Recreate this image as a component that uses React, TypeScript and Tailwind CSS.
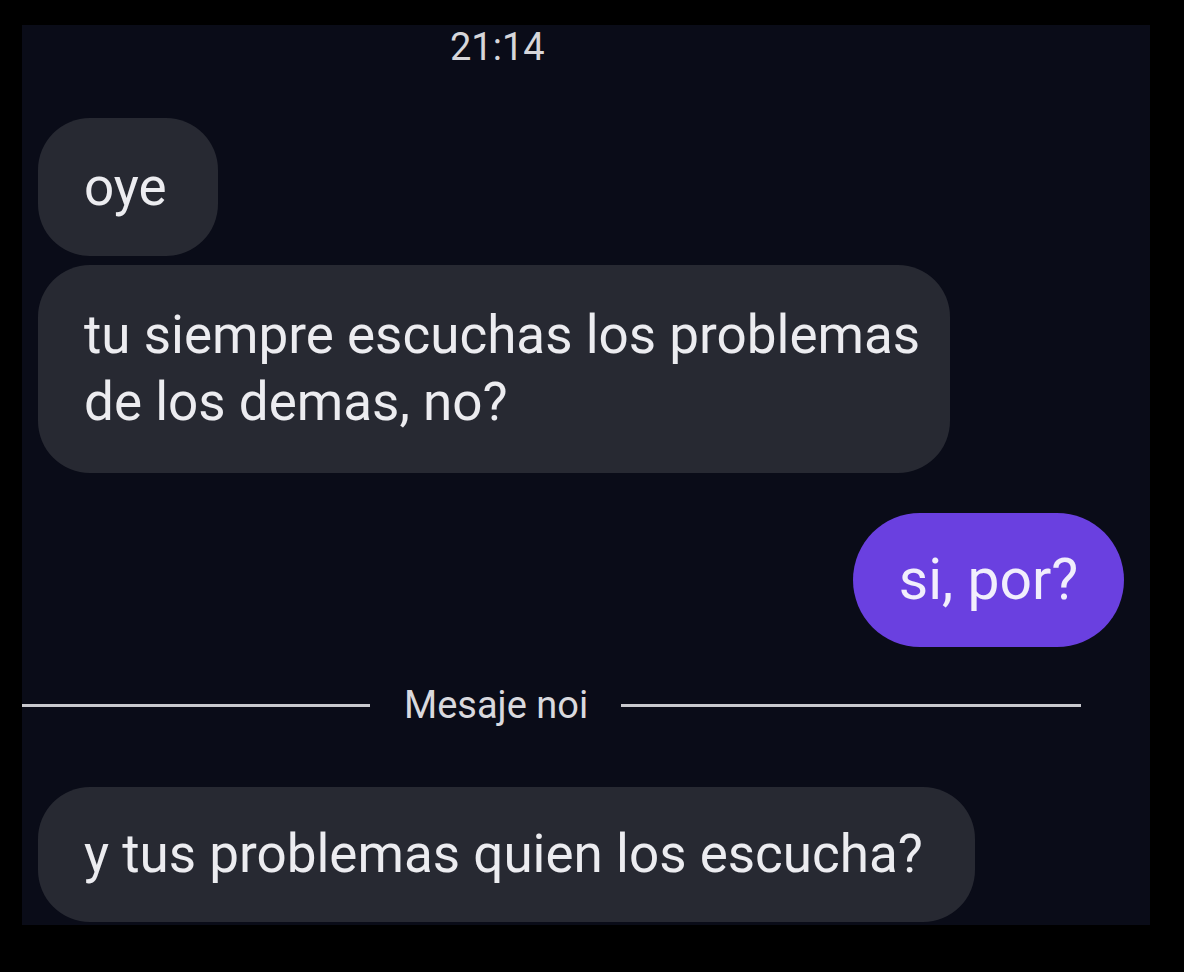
import React from "react";

const FONT = { fontFamily: "Roboto, 'Noto Sans', sans-serif" };

function Incoming({ children, className = "" }: { children: React.ReactNode; className?: string }) {
  return (
    <div
      className={`bg-[#272932] text-[#ececf0] rounded-[52px] pl-[46px] pr-[30px] flex flex-col justify-center whitespace-nowrap text-[53px] leading-[67px] ${className}`}
    >
      {children}
    </div>
  );
}

export default function App() {
  return (
    <div className="w-[1184px] h-[972px] bg-black pt-[25px] pl-[22px]" style={FONT}>
      <div className="w-[1128px] h-[900px] bg-[#0a0c18] overflow-hidden flex flex-col">
        {/* time header */}
        <div className="pl-[428px] pt-[2px] h-[93px] text-[38px] leading-[40px] text-[#d6d6da]">21:14</div>

        {/* thread */}
        <div className="flex flex-col pl-[16px]">
          <Incoming className="w-[180px] h-[138px]">oye</Incoming>
          <Incoming className="w-[912px] h-[208px] mt-[9px]">
            <span>tu siempre escuchas los problemas</span>
            <span>de los demas, no?</span>
          </Incoming>

          <div className="flex justify-end pr-[26px] mt-[40px]">
            <div className="w-[271px] h-[134px] rounded-full bg-[#6a40e0] text-[#f1eefc] text-[57px] whitespace-nowrap flex items-center justify-center">
              si, por?
            </div>
          </div>
        </div>

        {/* new messages divider */}
        <div className="flex items-center mt-[24px] h-[68px]">
          <div className="w-[348px] h-[3px] bg-[#c9c9ce]" />
          <span className="ml-[34px] mr-[33px] text-[38px] text-[#d9d9de] whitespace-nowrap">Mesaje noi</span>
          <div className="w-[460px] h-[3px] bg-[#c9c9ce]" />
        </div>

        <div className="pl-[16px] mt-[48px]">
          <Incoming className="w-[937px] h-[135px]">y tus problemas quien los escucha?</Incoming>
        </div>
      </div>
    </div>
  );
}
